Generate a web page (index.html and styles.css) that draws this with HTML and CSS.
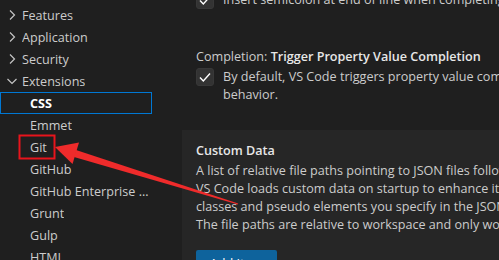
FILE: index.html
```html
<!DOCTYPE html>
<html lang="en">
<head>
  <meta charset="UTF-8">
  <title>Settings - CSS</title>
  <link rel="stylesheet" href="styles.css">
</head>
<body>
  <div class="sidebar">
    <div class="tree-row">
      <svg class="chevron" viewBox="0 0 16 16"><path d="M6 3.5 10.5 8 6 12.5"/></svg>
      <span>Features</span>
    </div>
    <div class="tree-row">
      <svg class="chevron" viewBox="0 0 16 16"><path d="M6 3.5 10.5 8 6 12.5"/></svg>
      <span>Application</span>
    </div>
    <div class="tree-row">
      <svg class="chevron" viewBox="0 0 16 16"><path d="M6 3.5 10.5 8 6 12.5"/></svg>
      <span>Security</span>
    </div>
    <div class="tree-row">
      <svg class="chevron" viewBox="0 0 16 16"><path d="M3.5 6 8 10.5 12.5 6"/></svg>
      <span>Extensions</span>
    </div>
    <div class="tree-row child selected"><span>CSS</span></div>
    <div class="tree-row child"><span>Emmet</span></div>
    <div class="tree-row child"><span>Git</span></div>
    <div class="tree-row child"><span>GitHub</span></div>
    <div class="tree-row child"><span>GitHub Enterprise Server</span></div>
    <div class="tree-row child"><span>Grunt</span></div>
    <div class="tree-row child"><span>Gulp</span></div>
    <div class="tree-row child"><span>HTML</span></div>
  </div>

  <div class="content">
    <div class="setting-list">
      <div class="setting">
        <div class="setting-title">Completion: <b>Completer Insert Semicolon</b></div>
        <div class="setting-check">
          <span class="checkbox"><svg viewBox="0 0 16 16"><path d="M3 8.5 6.3 12 13 4.5"/></svg></span>
          <span>Insert semicolon at end of line when completing CSS properties.</span>
        </div>
      </div>

      <div class="setting">
        <div class="setting-title">Completion: <b>Trigger Property Value Completion</b></div>
        <div class="setting-check">
          <span class="checkbox"><svg viewBox="0 0 16 16"><path d="M3 8.5 6.3 12 13 4.5"/></svg></span>
          <span>By default, VS Code triggers property value completion after selecting a CSS property. Use this setting to disable this<br>behavior.</span>
        </div>
      </div>

      <div class="setting focused">
        <div class="setting-title"><b>Custom Data</b></div>
        <div class="setting-desc">
          <div>A list of relative file paths pointing to JSON files following the custom data format.</div>
          <div>VS Code loads custom data on startup to enhance its CSS support for CSS custom properties (variables), at-rules, pseudo-</div>
          <div>classes and pseudo elements you specify in the JSON files.</div>
          <div>The file paths are relative to workspace and only workspace folder settings are considered.</div>
        </div>
        <button class="add-btn">Add Item</button>
      </div>
    </div>
  </div>

  <svg class="annotation" width="499" height="260" viewBox="0 0 499 260">
    <rect x="19.5" y="135.5" width="35" height="23" fill="none" stroke="#e8141c" stroke-width="2"/>
    <polygon fill="#ef2b2b" points="55,147 79,142.5 72.5,164"/>
    <polygon fill="#ef2b2b" points="76,150 74,157 237.8,204.5 238.2,203.5"/>
  </svg>
</body>
</html>
```

FILE: styles.css
```css
body {
  margin: 0;
  height: 260px;
  overflow: hidden;
  display: flex;
  background: #1f1f1f;
  color: #cccccc;
  font-family: 'Open Sans', 'Noto Sans', sans-serif;
  font-size: 12.6px;
  position: relative;
}

.sidebar {
  width: 152px;
  flex-shrink: 0;
  padding-top: 4px;
}

.tree-row {
  height: 22px;
  display: flex;
  align-items: center;
  padding-left: 4px;
  padding-right: 2px;
  box-sizing: border-box;
  white-space: nowrap;
}

.tree-row span {
  overflow: hidden;
  text-overflow: ellipsis;
}

.chevron {
  width: 16px;
  height: 16px;
  margin-right: 2px;
  flex-shrink: 0;
  fill: none;
  stroke: #c5c5c5;
  stroke-width: 1.2;
}

.tree-row.child {
  padding-left: 30px;
}

.tree-row.selected {
  outline: 1px solid #0078d4;
  outline-offset: -1px;
  color: #ffffff;
  font-weight: 700;
}

.content {
  flex: 1;
  padding-left: 30px;
  min-width: 0;
}

.setting-list {
  margin-top: -42px;
}

.setting {
  padding: 13px 14px 26px;
  white-space: nowrap;
}

.setting.focused {
  background: #262626;
  padding-top: 12px;
}

.setting-title {
  line-height: 18px;
}

.setting-title b {
  font-weight: 600;
  color: #e7e7e7;
}

.setting-check {
  display: flex;
  gap: 9px;
  margin-top: 2px;
  line-height: 18px;
}

.checkbox {
  width: 18px;
  height: 18px;
  flex-shrink: 0;
  box-sizing: border-box;
  background: #333333;
  border: 1px solid #383838;
  border-radius: 3px;
  display: flex;
  align-items: center;
  justify-content: center;
}

.checkbox svg {
  width: 16px;
  height: 16px;
  fill: none;
  stroke: #ffffff;
  stroke-width: 1.4;
}

.setting-desc {
  margin-top: 2px;
  line-height: 18px;
}

.add-btn {
  margin-top: 16px;
  width: 81px;
  height: 26px;
  border: none;
  border-radius: 2px;
  background: #0e639c;
  color: #ffffff;
  font-family: inherit;
  font-size: 12.6px;
}

.annotation {
  position: absolute;
  left: 0;
  top: 0;
  pointer-events: none;
}
```
